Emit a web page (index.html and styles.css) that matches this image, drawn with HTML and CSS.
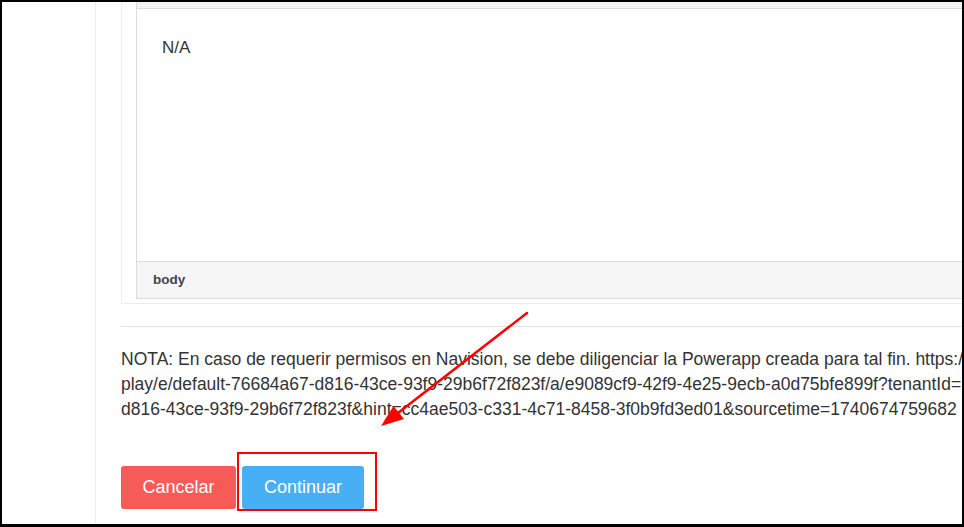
FILE: index.html
```html
<!DOCTYPE html>
<html lang="es">
<head>
<meta charset="utf-8">
<title>Formulario</title>
<link rel="stylesheet" href="styles.css">
</head>
<body>
<div class="frame">
  <aside class="sidebar"></aside>
  <main class="main">
    <div class="panel">
      <div class="editor">
        <div class="toolbar-tail"></div>
        <div class="editor-content">N/A</div>
        <div class="statusbar">body</div>
      </div>
    </div>
    <hr class="divider">
    <p class="note">
      <span class="line">NOTA: En caso de requerir permisos en Navision, se debe diligenciar la Powerapp creada para tal fin. https://apps.powerapps.com/</span>
      <span class="line">play/e/default-76684a67-d816-43ce-93f9-29b6f72f823f/a/e9089cf9-42f9-4e25-9ecb-a0d75bfe899f?tenantId=76684a67-</span>
      <span class="line">d816-43ce-93f9-29b6f72f823f&amp;hint=cc4ae503-c331-4c71-8458-3f0b9fd3ed01&amp;sourcetime=1740674759682</span>
    </p>
    <div class="actions">
      <button class="btn btn-cancel" type="button">Cancelar</button>
      <button class="btn btn-continue" type="button">Continuar</button>
    </div>
  </main>
  <div class="highlight"></div>
  <svg class="arrow" width="964" height="527" viewBox="0 0 964 527" aria-hidden="true">
    <line x1="527" y1="313" x2="398" y2="413" stroke="#ff0000" stroke-width="2.5" stroke-linecap="round"/>
    <polygon points="381,426 393.5,406 404,419" fill="#ff0000"/>
  </svg>
</div>
</body>
</html>
```

FILE: styles.css
```css
* { box-sizing: border-box; }

html, body {
  margin: 0;
  padding: 0;
  background: #fff;
}

body {
  font-family: "Liberation Sans", Arial, sans-serif;
  color: #333;
  overflow: hidden;
}

.frame {
  position: relative;
  width: 964px;
  height: 527px;
  border: 2px solid #000;
  border-bottom-width: 3px;
  display: flex;
  overflow: hidden;
  background: #fff;
}

.sidebar {
  flex: 0 0 94px;
  border-right: 1px solid #ececec;
  background: #fff;
}

.main {
  flex: 0 0 auto;
  width: 1200px;
  padding-left: 25px;
}

.panel {
  border-left: 1px solid #ececec;
  border-bottom: 1px solid #ececec;
  padding: 0 0 4px 14px;
}

.editor {
  border: 1px solid #dcdcdc;
  border-top: none;
}

.toolbar-tail {
  height: 7px;
  background: #f4f4f4;
  border-bottom: 1px solid #dcdcdc;
}

.editor-content {
  height: 252px;
  padding: 29px 25px 0;
  font-size: 17px;
  line-height: 19px;
  color: #333;
}

.statusbar {
  height: 37px;
  border-top: 1px solid #dcdcdc;
  background: #f6f6f6;
  padding-left: 16px;
  font-size: 13.5px;
  font-weight: bold;
  line-height: 35px;
  color: #444;
}

.divider {
  margin: 22px 0 0;
  border: none;
  border-top: 1px solid #e2e6ea;
  height: 0;
}

.note {
  margin: 20px 0 0;
  font-size: 17.5px;
  line-height: 25px;
  color: #333;
}

.line {
  display: block;
  white-space: nowrap;
}

.actions {
  display: flex;
  gap: 6px;
  margin-top: 44px;
}

.btn {
  height: 43px;
  padding: 0;
  border: none;
  border-radius: 3px;
  font-family: "Liberation Sans", Arial, sans-serif;
  font-size: 18px;
  color: #fff;
  cursor: pointer;
}

.btn-cancel {
  width: 115px;
  background: #f65b58;
}

.btn-continue {
  width: 122px;
  background: #49aff5;
}

.highlight {
  position: absolute;
  left: 235px;
  top: 450px;
  width: 140px;
  height: 59px;
  border: 2px solid #ff0000;
  pointer-events: none;
}

.arrow {
  position: absolute;
  left: -2px;
  top: -2px;
  pointer-events: none;
}
```
